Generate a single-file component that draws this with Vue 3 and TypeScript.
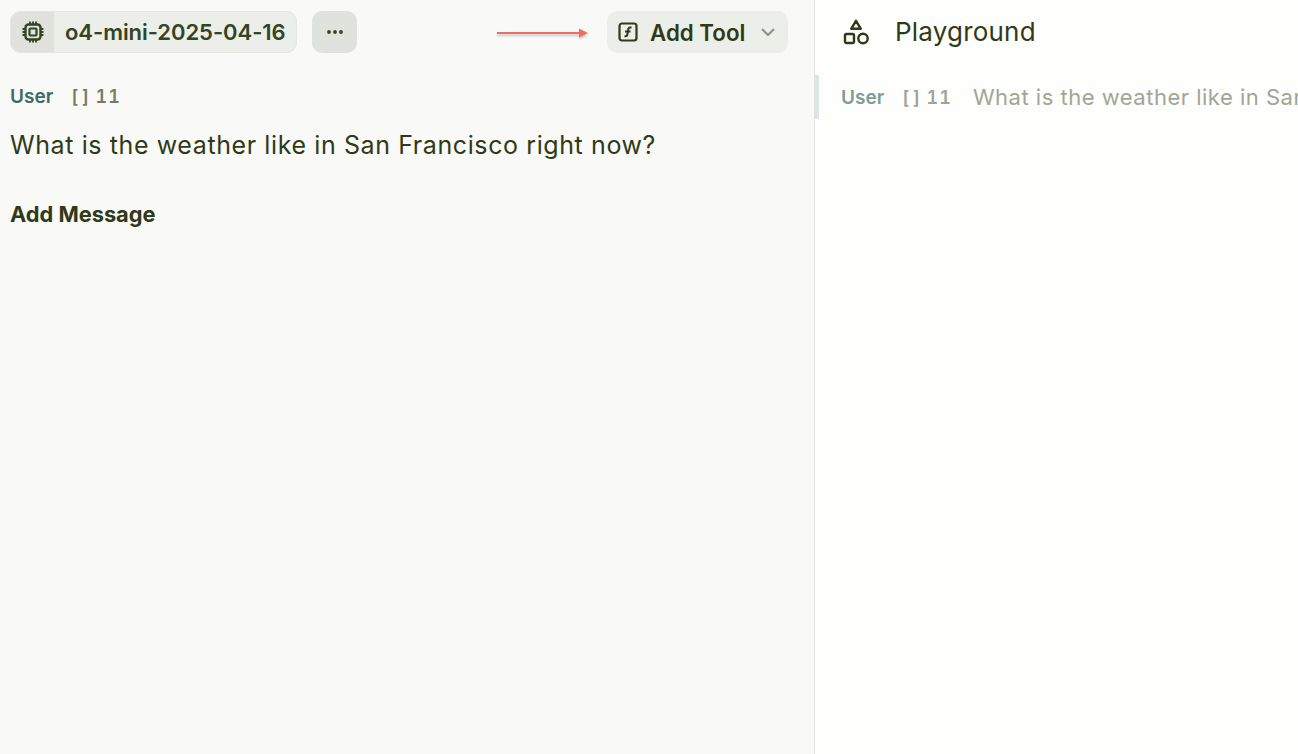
<script setup lang="ts">
const prompt = 'What is the weather like in San Francisco right now?';
</script>

<template>
  <div class="page">
    <section class="editor">
      <header class="toolbar">
        <div class="model">
          <span class="model-icon">
            <svg width="22" height="22" viewBox="0 0 22 22" fill="none" stroke="currentColor" stroke-width="2.400">
              <rect x="3.500" y="3.500" width="15" height="15" rx="3" />
              <rect x="7.500" y="7.500" width="7" height="7" rx="1" stroke-width="2.200" />
              <path d="M8 .5v3M11 .5v3M14 .5v3M8 18.500v3M11 18.500v3M14 18.500v3M.5 8h3M.5 11h3M.5 14h3M18.500 8h3M18.500 11h3M18.500 14h3" stroke-width="1.800" />
            </svg>
          </span>
          <span class="model-name">o4-mini-2025-04-16</span>
        </div>
        <button class="more" type="button" aria-label="More">
          <svg width="18" height="6" viewBox="0 0 18 6" fill="currentColor">
            <circle cx="3" cy="3" r="1.900" /><circle cx="9" cy="3" r="1.900" /><circle cx="15" cy="3" r="1.900" />
          </svg>
        </button>
        <div class="add-tool-wrap">
          <svg class="arrow" width="94" height="14" viewBox="0 0 94 14" fill="#ee6f62">
            <rect x="1" y="6" width="84" height="2" />
            <path d="M83 2.500 92 7l-9 4.500z" />
          </svg>
          <button class="add-tool" type="button">
            <svg width="20" height="20" viewBox="0 0 20 20" fill="none" stroke="currentColor" stroke-width="2.200">
              <rect x="1.500" y="1.500" width="17" height="17" rx="2.500" />
              <path d="M13.500 5.500h-1.500c-1 0-1.500.5-1.700 1.500l-1 5.800c-.2 1-.7 1.500-1.700 1.500H6.500M7 9.600h5.500" stroke-width="2" />
            </svg>
            <span>Add Tool</span>
            <svg class="chevron" width="16" height="10" viewBox="0 0 16 10" fill="none" stroke="currentColor" stroke-width="2">
              <path d="M2 2l6 6 6-6" />
            </svg>
          </button>
        </div>
      </header>

      <div class="message">
        <div class="meta">
          <span class="role">User</span>
          <span class="count"><span class="brackets">[ ]</span>11</span>
        </div>
        <p class="body">{{ prompt }}</p>
      </div>

      <div class="add-message">Add Message</div>
    </section>

    <aside class="preview">
      <header class="preview-head">
        <svg width="26" height="26" viewBox="0 0 26 26" fill="none" stroke="currentColor" stroke-width="2.400">
          <path d="M13 1.800l4.800 8H8.200z" stroke-linejoin="round" />
          <rect x="2" y="15" width="9" height="9" rx="1.500" />
          <circle cx="20" cy="19.500" r="4.700" />
        </svg>
        <span class="preview-title">Playground</span>
      </header>
      <div class="preview-row">
        <span class="role">User</span>
        <span class="count"><span class="brackets">[ ]</span>11</span>
        <span class="preview-text">{{ prompt }}</span>
      </div>
    </aside>
  </div>
</template>

<style>
html,
body {
  margin: 0;
  height: 100%;
  overflow: hidden;
}
</style>

<style scoped>
.page {
  display: flex;
  width: 1298px;
  height: 754px;
  overflow: hidden;
  font-family: Inter, 'Liberation Sans', sans-serif;
  color: #2f3a17;
}
.editor {
  flex: 0 0 814px;
  box-sizing: border-box;
  padding: 11px 26px 0 10px;
  background: #f9f9f7;
}
.toolbar {
  display: flex;
  align-items: center;
  height: 42px;
}
.model {
  display: flex;
  box-sizing: border-box;
  width: 287px;
  height: 42px;
  overflow: hidden;
  border: 1px solid #e6e8e1;
  border-radius: 10px;
  background: #eceee9;
}
.model-icon {
  display: flex;
  flex: 0 0 43px;
  align-items: center;
  justify-content: center;
  background: #e0e3dc;
  color: #354423;
}
.model-name {
  padding-left: 11px;
  font-size: 22px;
  font-weight: 600;
  letter-spacing: -0.05px;
  line-height: 40px;
  white-space: nowrap;
  color: #354423;
}
.more {
  display: flex;
  align-items: center;
  justify-content: center;
  width: 45px;
  height: 42px;
  margin-left: 15px;
  padding: 0;
  border: 0;
  border-radius: 10px;
  background: #e0e3dc;
  color: #354423;
}
.add-tool-wrap {
  position: relative;
  margin-left: auto;
}
.arrow {
  position: absolute;
  top: 15px;
  left: -111px;
  filter: drop-shadow(0 2px 1px rgba(0, 0, 0, 0.2));
}
.add-tool {
  display: flex;
  align-items: center;
  box-sizing: border-box;
  width: 181px;
  height: 42px;
  padding: 0 12px 0 11px;
  border: 0;
  border-radius: 10px;
  background: #eceee9;
  font-family: inherit;
  font-size: 22.300px;
  font-weight: 600;
  color: #2f3a17;
}
.add-tool span {
  margin-left: 12px;
  white-space: nowrap;
}
.chevron {
  margin-left: auto;
  color: #8b9282;
}
.message {
  margin-top: 30px;
}
.meta {
  display: flex;
  align-items: center;
  height: 26px;
}
.role {
  font-size: 19px;
  font-weight: 600;
  color: #3f6b63;
}
.count {
  display: inline-flex;
  align-items: center;
  gap: 7px;
  margin-left: 18px;
  font-size: 18px;
  font-weight: 600;
  letter-spacing: 1px;
  font-variant-numeric: tabular-nums;
  white-space: nowrap;
  color: #757c66;
}
.brackets {
  letter-spacing: -0.5px;
}
.body {
  margin: 19px 0 0;
  font-size: 25px;
  letter-spacing: 0.6px;
  line-height: 34px;
  color: #2f3a17;
}
.add-message {
  margin-top: 37px;
  font-size: 21.800px;
  font-weight: 700;
  line-height: 30px;
}
.preview {
  flex: 1;
  min-width: 0;
  border-left: 1px solid #e4e4e1;
  background: #fefefc;
}
.preview-head {
  display: flex;
  align-items: center;
  height: 64px;
  padding-left: 28px;
}
.preview-title {
  margin-left: 26px;
  margin-top: -2px;
  font-size: 26px;
  letter-spacing: 0.2px;
}
.preview-row {
  display: flex;
  align-items: center;
  box-sizing: border-box;
  height: 44px;
  margin-top: 11px;
  padding-left: 22px;
  overflow: hidden;
  border-left: 4px solid #d9e8e6;
  white-space: nowrap;
}
.preview-row .role {
  color: #7c9d97;
}
.preview-row .count {
  color: #9fa493;
}
.preview-text {
  margin-left: 21px;
  font-size: 22px;
  letter-spacing: 0.5px;
  color: #a0a695;
}
</style>
